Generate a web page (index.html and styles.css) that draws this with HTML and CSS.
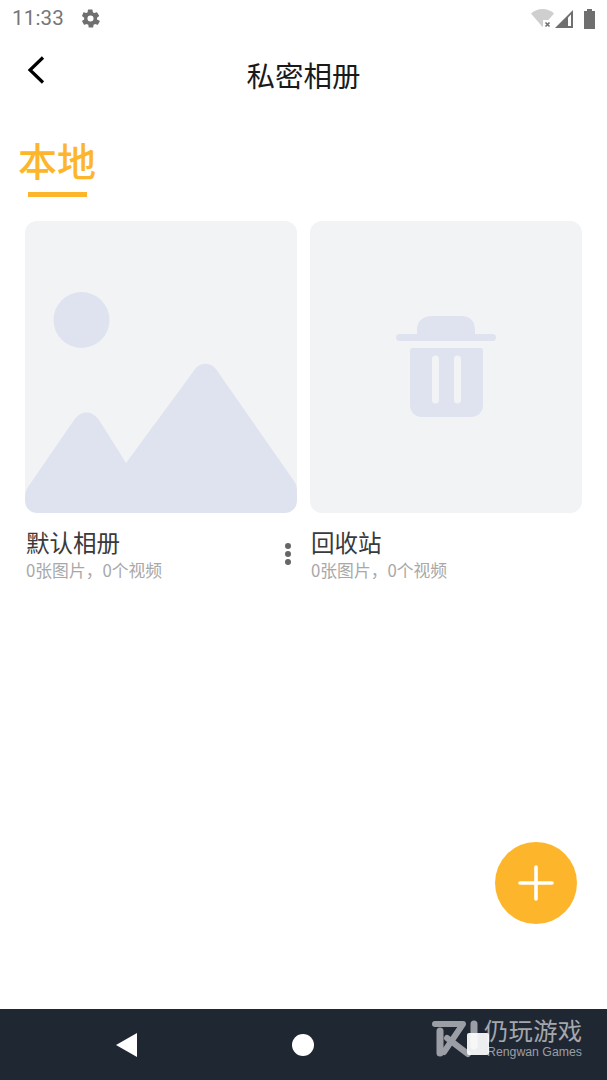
FILE: index.html
```html
<!DOCTYPE html>
<html lang="zh">
<head>
<meta charset="utf-8">
<title>私密相册</title>
<link rel="stylesheet" href="styles.css">
</head>
<body>
<div class="app">
  <div class="status">
    <div class="status-left">
      <span class="time">11:33</span>
      <svg class="gear" viewBox="0 0 24 24"><path fill="#6f6f6f" d="M19.4 13a7.6 7.6 0 0 0 0-2l2.2-1.7a.5.5 0 0 0 .1-.7l-2.1-3.6a.5.5 0 0 0-.6-.2l-2.6 1a7.6 7.6 0 0 0-1.7-1l-.4-2.7a.5.5 0 0 0-.5-.4h-4.2a.5.5 0 0 0-.5.4l-.4 2.7a7.6 7.6 0 0 0-1.7 1l-2.6-1a.5.5 0 0 0-.6.2L2.5 8.6a.5.5 0 0 0 .1.7L4.8 11a7.6 7.6 0 0 0 0 2l-2.2 1.7a.5.5 0 0 0-.1.7l2.1 3.6c.1.2.4.3.6.2l2.6-1a7.6 7.6 0 0 0 1.7 1l.4 2.7c0 .2.3.4.5.4h4.2c.2 0 .5-.2.5-.4l.4-2.7a7.6 7.6 0 0 0 1.7-1l2.6 1c.2.1.5 0 .6-.2l2.1-3.6a.5.5 0 0 0-.1-.7L19.4 13zM12 15.5a3.5 3.5 0 1 1 0-7 3.5 3.5 0 0 1 0 7z"/></svg>
    </div>
    <svg class="status-right" viewBox="0 0 65 22" width="65" height="22">
      <path fill="#cfcfcf" d="M0 6.500C3.500 3.500 7 2 11.500 2S20 3.500 23 6.500L11.500 20z"/>
      <rect x="12" y="13" width="10" height="9" fill="#fff"/>
      <path stroke="#6f6f6f" stroke-width="1.600" d="M14.500 15.500l4 4m0-4l-4 4"/>
      <path fill="#6f6f6f" d="M24 21 42 3V21z"/>
      <path fill="#fff" d="M37 10.500 40 7.500V19H37z"/>
      <path fill="#6f6f6f" d="M53 4h3V2h5v2h3v18H53z"/>
    </svg>
  </div>

  <header class="header">
    <svg class="back" viewBox="0 0 20 30"><path d="M17 2.500 4 15l13 12.500" fill="none" stroke="#000" stroke-width="3.200"/></svg>
    <h1 class="title">私密相册</h1>
  </header>

  <div class="tabs">
    <div class="tab">
      <span class="tab-label">本地</span>
      <span class="tab-line"></span>
    </div>
  </div>

  <div class="albums">
    <section class="album">
      <div class="thumb">
        <svg class="thumb-svg" viewBox="0 0 272 292">
          <circle cx="56.500" cy="99" r="28" fill="#dfe3ef"/>
          <path fill="#dfe3ef" d="M0 276 C0 272 1 269 3 266 L49 199 C56 189 67 189 74 199 C82 212 92 227 101 242 L168 151 C174 140 187 140 193 151 L269 260 C271 263 272 266 272 270 V280 A12 12 0 0 1 260 292 H12 A12 12 0 0 1 0 280 Z"/>
        </svg>
      </div>
      <div class="meta">
        <div class="meta-text">
          <div class="name">默认相册</div>
          <div class="count">0张图片，0个视频</div>
        </div>
        <div class="more"><i></i><i></i><i></i></div>
      </div>
    </section>
    <section class="album">
      <div class="thumb">
        <svg class="thumb-svg" viewBox="0 0 272 292">
          <path fill="#dfe3ef" d="M107 113 V109 C107 100 113 95 122 95 H151 C160 95 165 100 165 109 V113 H182.500 A3.500 3.500 0 0 1 182.500 120 H89.500 A3.500 3.500 0 0 1 89.500 113 Z"/>
          <path fill="#dfe3ef" fill-rule="evenodd" d="M102 127 H171 C172 127 173 128 173 129 V184 C173 191 168 196 161 196 H112 C105 196 100 191 100 184 V129 C100 128 101 127 102 127 Z M129 138 V179 A3.500 3.500 0 0 1 122 179 V138 A3.500 3.500 0 0 1 129 138 Z M151 138 V179 A3.500 3.500 0 0 1 144 179 V138 A3.500 3.500 0 0 1 151 138 Z"/>
        </svg>
      </div>
      <div class="meta">
        <div class="meta-text">
          <div class="name">回收站</div>
          <div class="count">0张图片，0个视频</div>
        </div>
      </div>
    </section>
  </div>

  <div class="spacer"></div>

  <nav class="navbar">
    <svg class="nav-icon" viewBox="0 0 24 26" width="24" height="26"><path fill="#fff" d="M1 13 22 1v24z"/></svg>
    <span class="nav-home"></span>
  </nav>

  <button class="fab" type="button" aria-label="add">
    <svg viewBox="0 0 36 36" width="36" height="36"><path d="M18 2v32M2 18h32" stroke="#fff" stroke-width="3.600" stroke-linecap="round"/></svg>
  </button>

  <div class="watermark">
    <svg class="wm-logo" viewBox="0 0 56 44" width="56" height="44">
      <g fill="none" stroke="#9b9ea5" stroke-linejoin="round" stroke-linecap="round">
        <path stroke-width="6" d="M3 5H31L12 33"/>
        <path stroke-width="7" d="M8 12V34"/>
        <path stroke-width="6" d="M15 19 36 35"/>
        <path stroke-width="7" d="M42 5V27"/>
      </g>
    </svg>
    <div class="wm-text">
      <span class="wm-cn">仍玩游戏</span>
      <span class="wm-en">Rengwan Games</span>
    </div>
  </div>
  <span class="nav-recent"></span>
</div>
</body>
</html>
```
FILE: styles.css
```css
* { box-sizing: border-box; }
html, body { margin: 0; padding: 0; }
body {
  background: #fff;
  font-family: "Noto Sans CJK SC", "Noto Sans", Roboto, sans-serif;
}
.app {
  position: relative;
  width: 607px;
  height: 1080px;
  display: flex;
  flex-direction: column;
  overflow: hidden;
}
.status {
  height: 36px;
  padding: 0 11px 0 12px;
  display: flex;
  justify-content: space-between;
  align-items: center;
  flex: none;
}
.status-left { display: flex; align-items: center; gap: 16px; }
.time {
  font-family: Roboto, sans-serif;
  font-size: 20.500px;
  line-height: 36px;
  color: #757575;
  letter-spacing: 0.2px;
}
.gear { width: 21px; height: 21px; }
.status-right { display: block; }
.header {
  height: 80px;
  padding-left: 26px;
  display: flex;
  align-items: center;
  position: relative;
  flex: none;
}
.back { width: 20px; height: 30px; margin-top: -13px; }
.title {
  position: absolute;
  left: 0;
  right: 0;
  top: 19px;
  margin: 0;
  text-align: center;
  font-size: 28.500px;
  line-height: 40px;
  font-weight: 400;
  color: #1a1a1a;
}
.tabs { padding-left: 18px; flex: none; height: 105px; }
.tab { display: inline-flex; flex-direction: column; align-items: center; }
.tab-label {
  font-size: 39px;
  line-height: 52px;
  font-weight: 500;
  color: #fdb62b;
  margin-top: 17px;
}
.tab-line {
  width: 59px;
  height: 5px;
  margin-top: 7px;
  background: #fdb62b;
}
.albums {
  display: flex;
  gap: 13px;
  padding-left: 25px;
  flex: none;
}
.album { width: 272px; }
.thumb {
  width: 272px;
  height: 292px;
  border-radius: 12px;
  background: #f2f3f5;
  overflow: hidden;
}
.thumb-svg { display: block; width: 272px; height: 292px; }
.meta {
  margin-top: 13px;
  padding-left: 1px;
  display: flex;
  justify-content: space-between;
  align-items: center;
}
.name {
  font-size: 23.500px;
  line-height: 32px;
  color: #3a3a3a;
}
.count {
  font-size: 16.800px;
  line-height: 22px;
  color: #a8a8a8;
  margin-top: 1px;
}
.more {
  display: flex;
  flex-direction: column;
  gap: 2px;
  margin-right: 6px;
}
.more i {
  display: block;
  width: 6px;
  height: 6px;
  border-radius: 50%;
  background: #666;
}
.spacer { flex: 1; }
.navbar {
  height: 71px;
  flex: none;
  background: #1f2733;
  display: grid;
  grid-template-columns: 254px 98px;
  align-items: center;
}
.nav-icon { justify-self: center; }
.nav-home {
  justify-self: center;
  width: 22px;
  height: 22px;
  border-radius: 50%;
  background: #fff;
}
.nav-recent {
  position: absolute;
  left: 467px;
  top: 1033px;
  width: 22px;
  height: 22px;
  background: #fff;
  opacity: .92;
  border-radius: 2px;
}
.fab {
  position: absolute;
  left: 495px;
  top: 842px;
  width: 82px;
  height: 82px;
  padding: 0;
  border: 0;
  border-radius: 50%;
  background: #fdb62b;
  display: flex;
  align-items: center;
  justify-content: center;
}
.watermark {
  position: absolute;
  left: 432px;
  top: 1016px;
  display: flex;
}
.wm-logo { display: block; margin-top: 3px; }
.wm-text { display: flex; flex-direction: column; margin-left: -4px; }
.wm-cn {
  font-size: 24.300px;
  line-height: 28px;
  color: #a4a7ad;
  letter-spacing: 0.300px;
}
.wm-en {
  font-family: "Liberation Sans", sans-serif;
  font-size: 12.300px;
  line-height: 16px;
  color: #9b9ea5;
  margin: 0 0 0 3px;
}
```
